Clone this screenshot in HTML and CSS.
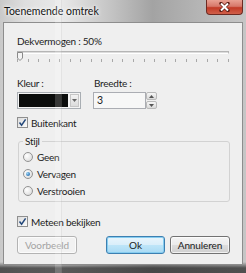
FILE: index.html
```html
<!DOCTYPE html>
<html lang="nl">

<head>
    <meta charset="UTF-8">
    <title>Toenemende omtrek</title>
    <link rel="stylesheet" href="styles.css">
</head>

<body>
    <div class="window">
        <div class="titlebar">
            <span class="title">Toenemende omtrek</span>
            <span class="close">
                <svg width="13" height="10" viewBox="0 0 13 10">
                    <path d="M3 1.5 L10 8.5 M10 1.5 L3 8.5" stroke="#5a1a12" stroke-width="3.4" stroke-linecap="round"/>
                    <path d="M3 1.5 L10 8.5 M10 1.5 L3 8.5" stroke="#fff" stroke-width="2"/>
                </svg>
            </span>
        </div>

        <div class="client">
            <div class="label">Dekvermogen : 50%</div>
            <div class="slider">
                <div class="track"></div>
                <svg class="thumb" width="6" height="9" viewBox="0 0 6 9">
                    <path d="M0.5 0.5 H5.5 V6 L3 8.5 L0.5 6 Z" fill="#f4f4f4" stroke="#8a8a8a"/>
                </svg>
                <div class="ticks">
                    <i></i><i></i><i></i><i></i><i></i><i></i><i></i>
                    <i></i><i></i><i></i><i></i><i></i><i></i><i></i>
                    <i></i><i></i><i></i><i></i><i></i><i></i><i></i>
                </div>
            </div>

            <div class="fields">
                <div class="field">
                    <div class="label">Kleur :</div>
                    <div class="combo">
                        <span class="swatch"></span>
                        <span class="drop">
                            <svg width="5" height="3" viewBox="0 0 5 3"><path d="M0 0 H5 L2.5 3 Z" fill="#666"/></svg>
                        </span>
                    </div>
                </div>
                <div class="field field-width">
                    <div class="label">Breedte :</div>
                    <div class="spinner">
                        <span class="number">3</span>
                        <span class="spin">
                            <span class="spin-btn"><svg width="5" height="3" viewBox="0 0 5 3"><path d="M0 3 H5 L2.5 0 Z" fill="#555"/></svg></span>
                            <span class="spin-btn"><svg width="5" height="3" viewBox="0 0 5 3"><path d="M0 0 H5 L2.5 3 Z" fill="#555"/></svg></span>
                        </span>
                    </div>
                </div>
            </div>

            <div class="check-row">
                <span class="checkbox checked">
                    <svg width="9" height="9" viewBox="0 0 9 9"><path d="M1.5 4.5 L3.6 7.2 L7.6 1.4" fill="none" stroke="#22477a" stroke-width="1.5"/></svg>
                </span>
                <span>Buitenkant</span>
            </div>

            <fieldset class="group">
                <legend>Stijl</legend>
                <div class="radio-row"><span class="radio"></span><span>Geen</span></div>
                <div class="radio-row"><span class="radio selected"></span><span>Vervagen</span></div>
                <div class="radio-row"><span class="radio"></span><span>Verstrooien</span></div>
            </fieldset>

            <div class="check-row preview-row">
                <span class="checkbox checked">
                    <svg width="9" height="9" viewBox="0 0 9 9"><path d="M1.5 4.5 L3.6 7.2 L7.6 1.4" fill="none" stroke="#22477a" stroke-width="1.5"/></svg>
                </span>
                <span>Meteen bekijken</span>
            </div>

            <div class="buttons">
                <button type="button" class="btn" disabled>Voorbeeld</button>
                <button type="button" class="btn btn-default">Ok</button>
                <button type="button" class="btn">Annuleren</button>
            </div>
        </div>

        <div class="streak"></div>
    </div>
</body>

</html>
```

FILE: styles.css
```css
body {
    margin: 0;
    font-family: Lato, "Liberation Sans", sans-serif;
    font-size: 10px;
    letter-spacing: -0.25px;
    color: #1c1c1c;
}

.window {
    position: relative;
    width: 246px;
    height: 273px;
    box-sizing: border-box;
    padding: 0 3px 8px;
    display: flex;
    flex-direction: column;
    overflow: hidden;
    background:
        linear-gradient(to bottom, rgba(0, 0, 0, 0) 0, rgba(0, 0, 0, 0) 262px, rgba(40, 40, 40, 0.75) 268px),
        linear-gradient(to right, #c9c9c9 0, #dedede 10%, #e9e9e9 25%, #c4c4c4 45%, #a3a3a3 62%, #b4b4b4 80%, #c6c6c6 100%);
}

.titlebar {
    height: 22px;
    display: flex;
    align-items: flex-start;
}

.title {
    margin: 5px 0 0 1px;
    font-size: 10.5px;
    line-height: 13px;
    letter-spacing: 0;
    color: #141414;
    text-shadow: 0 0 5px #fff, 0 0 3px #fff;
}

.close {
    margin-left: auto;
    width: 37px;
    height: 15px;
    box-sizing: border-box;
    border: 1px solid #6d2a22;
    border-top: none;
    border-radius: 0 0 4px 4px;
    background: linear-gradient(to bottom, #e9a193 0, #d7786a 45%, #c23a26 55%, #d0604a 100%);
    display: flex;
    align-items: center;
    justify-content: center;
}

.client {
    flex: 1;
    border: 1px solid #8d8d8d;
    background: #efefef;
    padding: 12px 12px 0 13px;
}

.label {
    line-height: 13px;
}

.slider {
    position: relative;
    height: 17px;
    margin-right: 1px;
}

.track {
    margin-top: 3px;
    height: 1px;
    border: 1px solid #b5b5b5;
    border-bottom-color: #fff;
    background: #dcdcdc;
}

.thumb {
    position: absolute;
    left: 0;
    top: 1px;
}

.ticks {
    margin-top: 5px;
    height: 3px;
    display: flex;
    justify-content: space-between;
}

.ticks i {
    width: 1px;
    background: #a8a8a8;
}

.fields {
    display: flex;
    gap: 12px;
    margin-top: 9px;
}

.combo {
    margin-top: 2px;
    width: 64px;
    height: 17px;
    box-sizing: border-box;
    border: 1px solid #a9aeb3;
    background: #f4f4f4;
    display: flex;
    padding: 1px;
    gap: 2px;
}

.swatch {
    width: 49px;
    background: #0b0d0c;
}

.drop {
    flex: 1;
    border: 1px solid #c6c6c6;
    background: linear-gradient(to bottom, #f2f2f2, #dcdcdc);
    display: flex;
    align-items: center;
    justify-content: center;
}

.field-width .label {
    padding-left: 1px;
}

.spinner {
    margin-top: 2px;
    display: flex;
    height: 17px;
}

.number {
    width: 53px;
    box-sizing: border-box;
    border: 1px solid #abadb3;
    background: #f7f7f7;
    padding-left: 3px;
    line-height: 15px;
    font-size: 10.5px;
}

.spin {
    width: 11px;
    display: flex;
    flex-direction: column;
    gap: 1px;
}

.spin-btn {
    flex: 1;
    border: 1px solid #b9b9b9;
    border-radius: 2px;
    background: linear-gradient(to bottom, #f6f6f6, #dadada);
    display: flex;
    align-items: center;
    justify-content: center;
}

.check-row {
    margin-top: 7px;
    height: 13px;
    display: flex;
    align-items: center;
    gap: 3px;
}

.checkbox {
    width: 11px;
    height: 11px;
    box-sizing: border-box;
    border: 1px solid #8f8f8f;
    background: linear-gradient(135deg, #dcdcdc, #fbfbfb);
    display: flex;
    align-items: center;
    justify-content: center;
}

.group {
    margin: 6px 0 0 1px;
    padding: 0 4px 2px;
    border: 1px solid #d2d2d2;
    border-radius: 3px;
}

.group legend {
    padding: 0 2px;
    line-height: 13px;
}

.radio-row {
    height: 17px;
    display: flex;
    align-items: center;
    gap: 4px;
}

.radio {
    width: 10px;
    height: 10px;
    box-sizing: border-box;
    border-radius: 50%;
    border: 1px solid #939393;
    background: radial-gradient(circle at 35% 35%, #fff 0, #e6e6e6 60%, #cfcfcf 100%);
    display: flex;
    align-items: center;
    justify-content: center;
}

.radio.selected::after {
    content: "";
    width: 4px;
    height: 4px;
    border-radius: 50%;
    background: radial-gradient(circle at 35% 35%, #9fd6f5 0, #2f77b8 70%, #1d4f86 100%);
}

.preview-row {
    margin-top: 13px;
}

.buttons {
    margin-top: 8px;
    display: flex;
    gap: 5px;
}

.btn {
    width: 60px;
    height: 18px;
    padding: 0;
    font-family: inherit;
    font-size: 10px;
    letter-spacing: -0.1px;
    color: #1c1c1c;
    border: 1px solid #727272;
    border-radius: 3px;
    background: linear-gradient(to bottom, #f4f4f4 0, #ebebeb 50%, #dddddd 51%, #cfcfcf 100%);
    box-shadow: inset 0 0 0 1px rgba(255, 255, 255, 0.7);
}

.btn:disabled {
    color: #a3a3a3;
    border-color: #b3b3b3;
    background: #f2f2f2;
}

.btn-default {
    margin-left: auto;
    width: 59px;
    border-color: #3c7fb1;
    background: linear-gradient(to bottom, #e9f5fc 0, #d9eefa 50%, #bee5f8 51%, #a9daf4 100%);
    box-shadow: inset 0 0 0 1px #86cdf0;
}

.streak {
    position: absolute;
    top: 0;
    bottom: 0;
    left: 55px;
    width: 6px;
    background: rgba(255, 255, 255, 0.18);
    border-right: 1px solid rgba(0, 0, 0, 0.06);
    pointer-events: none;
}
```
